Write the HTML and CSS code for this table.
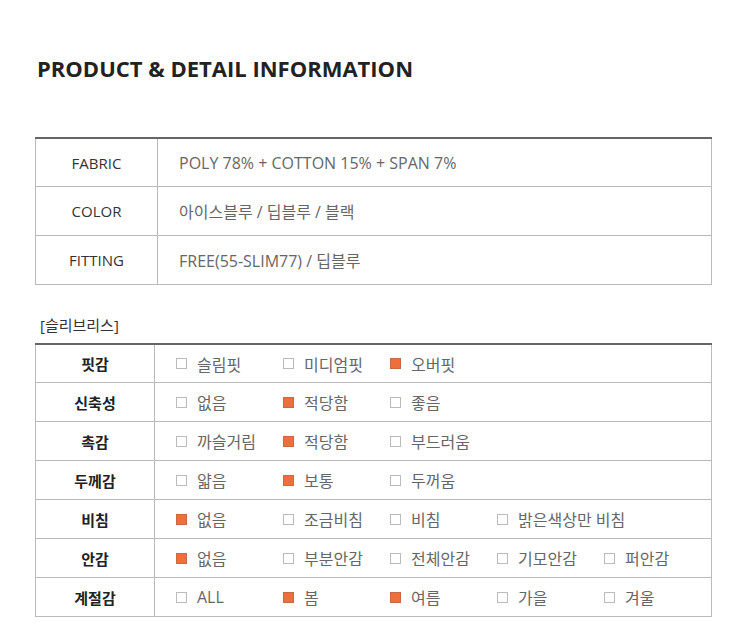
FILE: index.html
```html
<!DOCTYPE html>
<html lang="ko">
<head>
    <meta charset="UTF-8">
    <meta name="viewport" content="width=device-width, initial-scale=1.0">
    <title>Product &amp; Detail Information</title>
    <link rel="stylesheet" href="styles.css">
</head>
<body>
    <div class="wrap">
        <h1 class="title">PRODUCT &amp; DETAIL INFORMATION</h1>

        <!-- basic info -->
        <table class="info">
            <tr>
                <th>FABRIC</th>
                <td>POLY 78% + COTTON 15% + SPAN 7%</td>
            </tr>
            <tr>
                <th>COLOR</th>
                <td>아이스블루 / 딥블루 / 블랙</td>
            </tr>
            <tr>
                <th>FITTING</th>
                <td>FREE(55-SLIM77) / 딥블루</td>
            </tr>
        </table>

        <p class="item-name">[슬리브리스]</p>

        <!-- detail check -->
        <table class="detail">
            <tr>
                <th>핏감</th>
                <td>
                    <div class="opts">
                        <span class="opt"><i class="box"></i>슬림핏</span>
                        <span class="opt"><i class="box"></i>미디엄핏</span>
                        <span class="opt"><i class="box on"></i>오버핏</span>
                    </div>
                </td>
            </tr>
            <tr>
                <th>신축성</th>
                <td>
                    <div class="opts">
                        <span class="opt"><i class="box"></i>없음</span>
                        <span class="opt"><i class="box on"></i>적당함</span>
                        <span class="opt"><i class="box"></i>좋음</span>
                    </div>
                </td>
            </tr>
            <tr>
                <th>촉감</th>
                <td>
                    <div class="opts">
                        <span class="opt"><i class="box"></i>까슬거림</span>
                        <span class="opt"><i class="box on"></i>적당함</span>
                        <span class="opt"><i class="box"></i>부드러움</span>
                    </div>
                </td>
            </tr>
            <tr>
                <th>두께감</th>
                <td>
                    <div class="opts">
                        <span class="opt"><i class="box"></i>얇음</span>
                        <span class="opt"><i class="box on"></i>보통</span>
                        <span class="opt"><i class="box"></i>두꺼움</span>
                    </div>
                </td>
            </tr>
            <tr>
                <th>비침</th>
                <td>
                    <div class="opts">
                        <span class="opt"><i class="box on"></i>없음</span>
                        <span class="opt"><i class="box"></i>조금비침</span>
                        <span class="opt"><i class="box"></i>비침</span>
                        <span class="opt"><i class="box"></i>밝은색상만 비침</span>
                    </div>
                </td>
            </tr>
            <tr>
                <th>안감</th>
                <td>
                    <div class="opts">
                        <span class="opt"><i class="box on"></i>없음</span>
                        <span class="opt"><i class="box"></i>부분안감</span>
                        <span class="opt"><i class="box"></i>전체안감</span>
                        <span class="opt"><i class="box"></i>기모안감</span>
                        <span class="opt"><i class="box"></i>퍼안감</span>
                    </div>
                </td>
            </tr>
            <tr>
                <th>계절감</th>
                <td>
                    <div class="opts">
                        <span class="opt"><i class="box"></i>ALL</span>
                        <span class="opt"><i class="box on"></i>봄</span>
                        <span class="opt"><i class="box on"></i>여름</span>
                        <span class="opt"><i class="box"></i>가을</span>
                        <span class="opt"><i class="box"></i>겨울</span>
                    </div>
                </td>
            </tr>
        </table>
    </div>
</body>
</html>
```

FILE: styles.css
```css
body {
    margin: 0;
    background: #fff;
    font-family: "Open Sans", "Noto Sans CJK KR", sans-serif;
    color: #333;
}

.wrap {
    width: 677px;
    padding: 53px 0 0 35px;
}

.title {
    margin: 0 0 0 2px;
    font-size: 22px;
    font-weight: 700;
    color: #222;
    line-height: 30px;
}

table {
    width: 100%;
    border-collapse: collapse;
    border-top: 2px solid #666;
}

th,
td {
    border: 1px solid #bbb;
    font-size: 15px;
    padding: 0;
}

th {
    width: 121px;
    text-align: center;
}

td {
    padding-left: 21px;
    font-size: 16px;
    color: #666;
}

.info {
    margin-top: 54px;
}

.info th {
    height: 48px;
    font-weight: 400;
    color: #333;
}

.info tr:first-child th {
    height: 47px;
}

.item-name {
    margin: 29px 0 0 5px;
    font-size: 15px;
    line-height: 22px;
    color: #333;
}

.detail {
    margin-top: 7px;
}

.detail th {
    height: 38px;
    font-weight: 700;
    color: #222;
}

.detail tr:first-child th {
    height: 37px;
}

.opts {
    display: flex;
}

.opt {
    display: flex;
    align-items: center;
    width: 107px;
    white-space: nowrap;
}

.box {
    width: 11px;
    height: 11px;
    border: 1px solid #bbb;
    margin-right: 10px;
    box-sizing: border-box;
    flex: none;
}

.box.on {
    background: #ef6f3c;
    border-color: #c96a44;
}
```
